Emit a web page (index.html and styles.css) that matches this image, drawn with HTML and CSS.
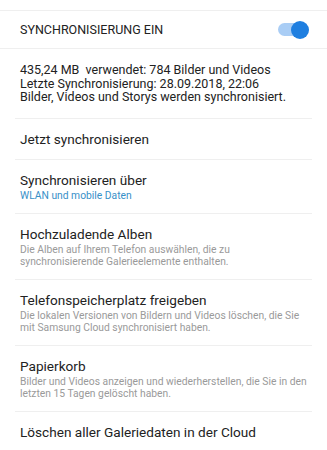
FILE: index.html
```html
<!DOCTYPE html>
<html lang="de">

<head>
  <meta charset="UTF-8">
  <meta name="viewport" content="width=device-width, initial-scale=1.0">
  <title>Galerie</title>
  <link rel="stylesheet" href="styles.css">
</head>

<body>
  <div class="top"></div>
  <div class="head">
    <span class="head-title">SYNCHRONISIERUNG EIN</span>
    <div class="switch">
      <div class="knob"></div>
    </div>
  </div>
  <div class="info">
    <div>435,24 MB&nbsp; verwendet: 784 Bilder und Videos</div>
    <div>Letzte Synchronisierung: 28.09.2018, 22:06</div>
    <div>Bilder, Videos und Storys werden synchronisiert.</div>
  </div>
  <div class="list">
    <div class="item">
      <div class="title">Jetzt synchronisieren</div>
    </div>
    <div class="item">
      <div class="title">Synchronisieren über</div>
      <div class="sub blue">WLAN und mobile Daten</div>
    </div>
    <div class="item">
      <div class="title">Hochzuladende Alben</div>
      <div class="sub">Die Alben auf Ihrem Telefon auswählen, die zu synchronisierende Galerieelemente enthalten.</div>
    </div>
    <div class="item">
      <div class="title">Telefonspeicherplatz freigeben</div>
      <div class="sub">Die lokalen Versionen von Bildern und Videos löschen, die Sie mit Samsung Cloud synchronisiert haben.</div>
    </div>
    <div class="item">
      <div class="title">Papierkorb</div>
      <div class="sub">Bilder und Videos anzeigen und wiederherstellen, die Sie in den letzten 15 Tagen gelöscht haben.</div>
    </div>
    <div class="item">
      <div class="title">Löschen aller Galeriedaten in der Cloud</div>
    </div>
  </div>
</body>

</html>
```

FILE: styles.css
```css
body {
  margin: 0;
  background-color: #fff;
  color: #222;
  font-family: Roboto, "Noto Sans", sans-serif;
}

.top {
  height: 10px;
  border-bottom: 1px solid #efefef;
}

.head {
  height: 37px;
  display: flex;
  align-items: center;
  justify-content: space-between;
  padding: 0 21px 0 20px;
  border-bottom: 1px solid #efefef;
}

.head-title {
  font-size: 12.5px;
  color: #222;
}

.switch {
  position: relative;
  width: 28px;
  height: 13px;
  border-radius: 7px;
  background-color: #a9cdf5;
}

.knob {
  position: absolute;
  right: -3px;
  top: -2.5px;
  width: 18px;
  height: 18px;
  border-radius: 50%;
  background-color: #1f7fe0;
}

.info {
  padding: 14px 20px 14px;
  font-size: 12.5px;
  line-height: 13.7px;
  color: #222;
}

.list {
  margin: 0 15px;
}

.item {
  padding: 10px 0 10px 5px;
  border-top: 1px solid #efefef;
}

.item:last-child {
  border-bottom: 1px solid #efefef;
}

.title {
  font-size: 13.6px;
  line-height: 20px;
  color: #222;
}

.sub {
  font-size: 10.3px;
  line-height: 12.5px;
  color: #9a9a9a;
}

.blue {
  color: #3890c8;
}
```
